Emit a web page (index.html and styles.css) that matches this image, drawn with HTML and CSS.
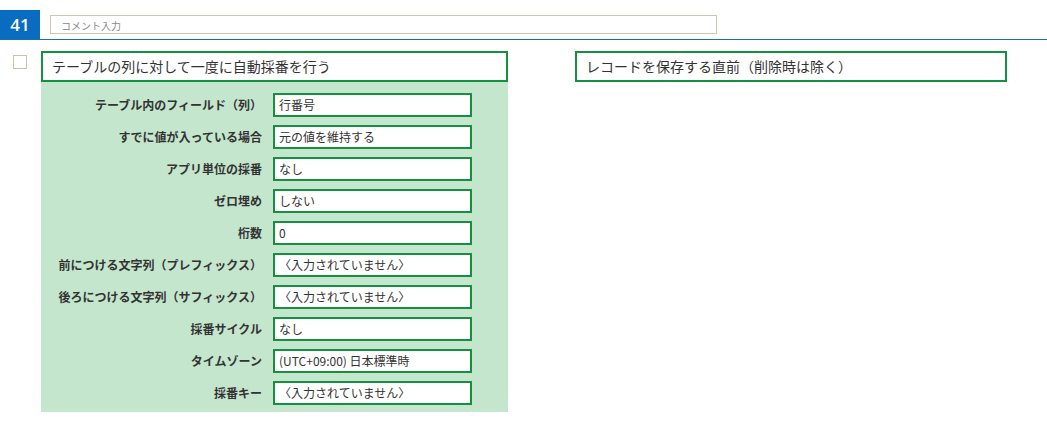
FILE: index.html
```html
<!DOCTYPE html>
<html lang="ja">
<head>
<meta charset="utf-8">
<link rel="stylesheet" href="styles.css">
</head>
<body>
<div class="header">
  <div class="num">41</div>
  <div class="comment">コメント入力</div>
</div>
<div class="main">
  <div class="check"></div>
  <div class="left">
    <div class="title">テーブルの列に対して一度に自動採番を行う</div>
    <div class="panel">
      <div class="label">テーブル内のフィールド（列）</div><div class="field">行番号</div>
      <div class="label">すでに値が入っている場合</div><div class="field">元の値を維持する</div>
      <div class="label">アプリ単位の採番</div><div class="field">なし</div>
      <div class="label">ゼロ埋め</div><div class="field">しない</div>
      <div class="label">桁数</div><div class="field">0</div>
      <div class="label">前につける文字列（プレフィックス）</div><div class="field">〈入力されていません〉</div>
      <div class="label">後ろにつける文字列（サフィックス）</div><div class="field">〈入力されていません〉</div>
      <div class="label">採番サイクル</div><div class="field">なし</div>
      <div class="label">タイムゾーン</div><div class="field">(UTC+09:00) 日本標準時</div>
      <div class="label">採番キー</div><div class="field">〈入力されていません〉</div>
    </div>
  </div>
  <div class="right">
    <div class="title">レコードを保存する直前（削除時は除く）</div>
  </div>
</div>
</body>
</html>
```
FILE: styles.css
```css
html, body {
  margin: 0;
  padding: 0;
  background: #ffffff;
  font-family: "Noto Sans CJK JP", "Noto Sans", sans-serif;
  color: #333333;
}
.header {
  margin-top: 10px;
  height: 29px;
  border-bottom: 1px solid #1a6cb4;
  display: flex;
  align-items: flex-start;
}
.num {
  width: 40px;
  height: 29px;
  background: #0a6cc0;
  color: #ffffff;
  font-family: "Open Sans", "Noto Sans", sans-serif;
  font-size: 17px;
  font-weight: 600;
  line-height: 29px;
  text-align: center;
}
.comment {
  margin-left: 10px;
  margin-top: 5px;
  width: 655px;
  height: 17px;
  border: 1px solid #d6c3ab;
  font-size: 10px;
  line-height: 19px;
  color: #888888;
  padding-left: 10px;
  box-sizing: content-box;
}
.main {
  display: flex;
  align-items: flex-start;
  margin-top: 11px;
}
.check {
  width: 12px;
  height: 12px;
  border: 1px solid #d2bfa8;
  margin-left: 13px;
  margin-top: 4px;
  background: #ffffff;
}
.left {
  margin-left: 14px;
  width: 467px;
}
.right {
  margin-left: 67px;
  width: 432px;
}
.title {
  height: 31px;
  box-sizing: border-box;
  border: 2px solid #149040;
  background: #ffffff;
  font-size: 14px;
  line-height: 27px;
  padding-left: 9px;
  color: #333333;
}
.panel {
  background: #c3e6cd;
  display: grid;
  grid-template-columns: 221px 199px;
  column-gap: 11px;
  row-gap: 8px;
  padding: 11px 0 7px 0;
}
.label {
  text-align: right;
  font-size: 12px;
  font-weight: 700;
  line-height: 24px;
  color: #333333;
  white-space: nowrap;
}
.field {
  height: 24px;
  box-sizing: border-box;
  border: 2px solid #149040;
  background: #ffffff;
  font-size: 12px;
  line-height: 20px;
  padding-left: 4px;
  color: #333333;
  white-space: nowrap;
}
```
